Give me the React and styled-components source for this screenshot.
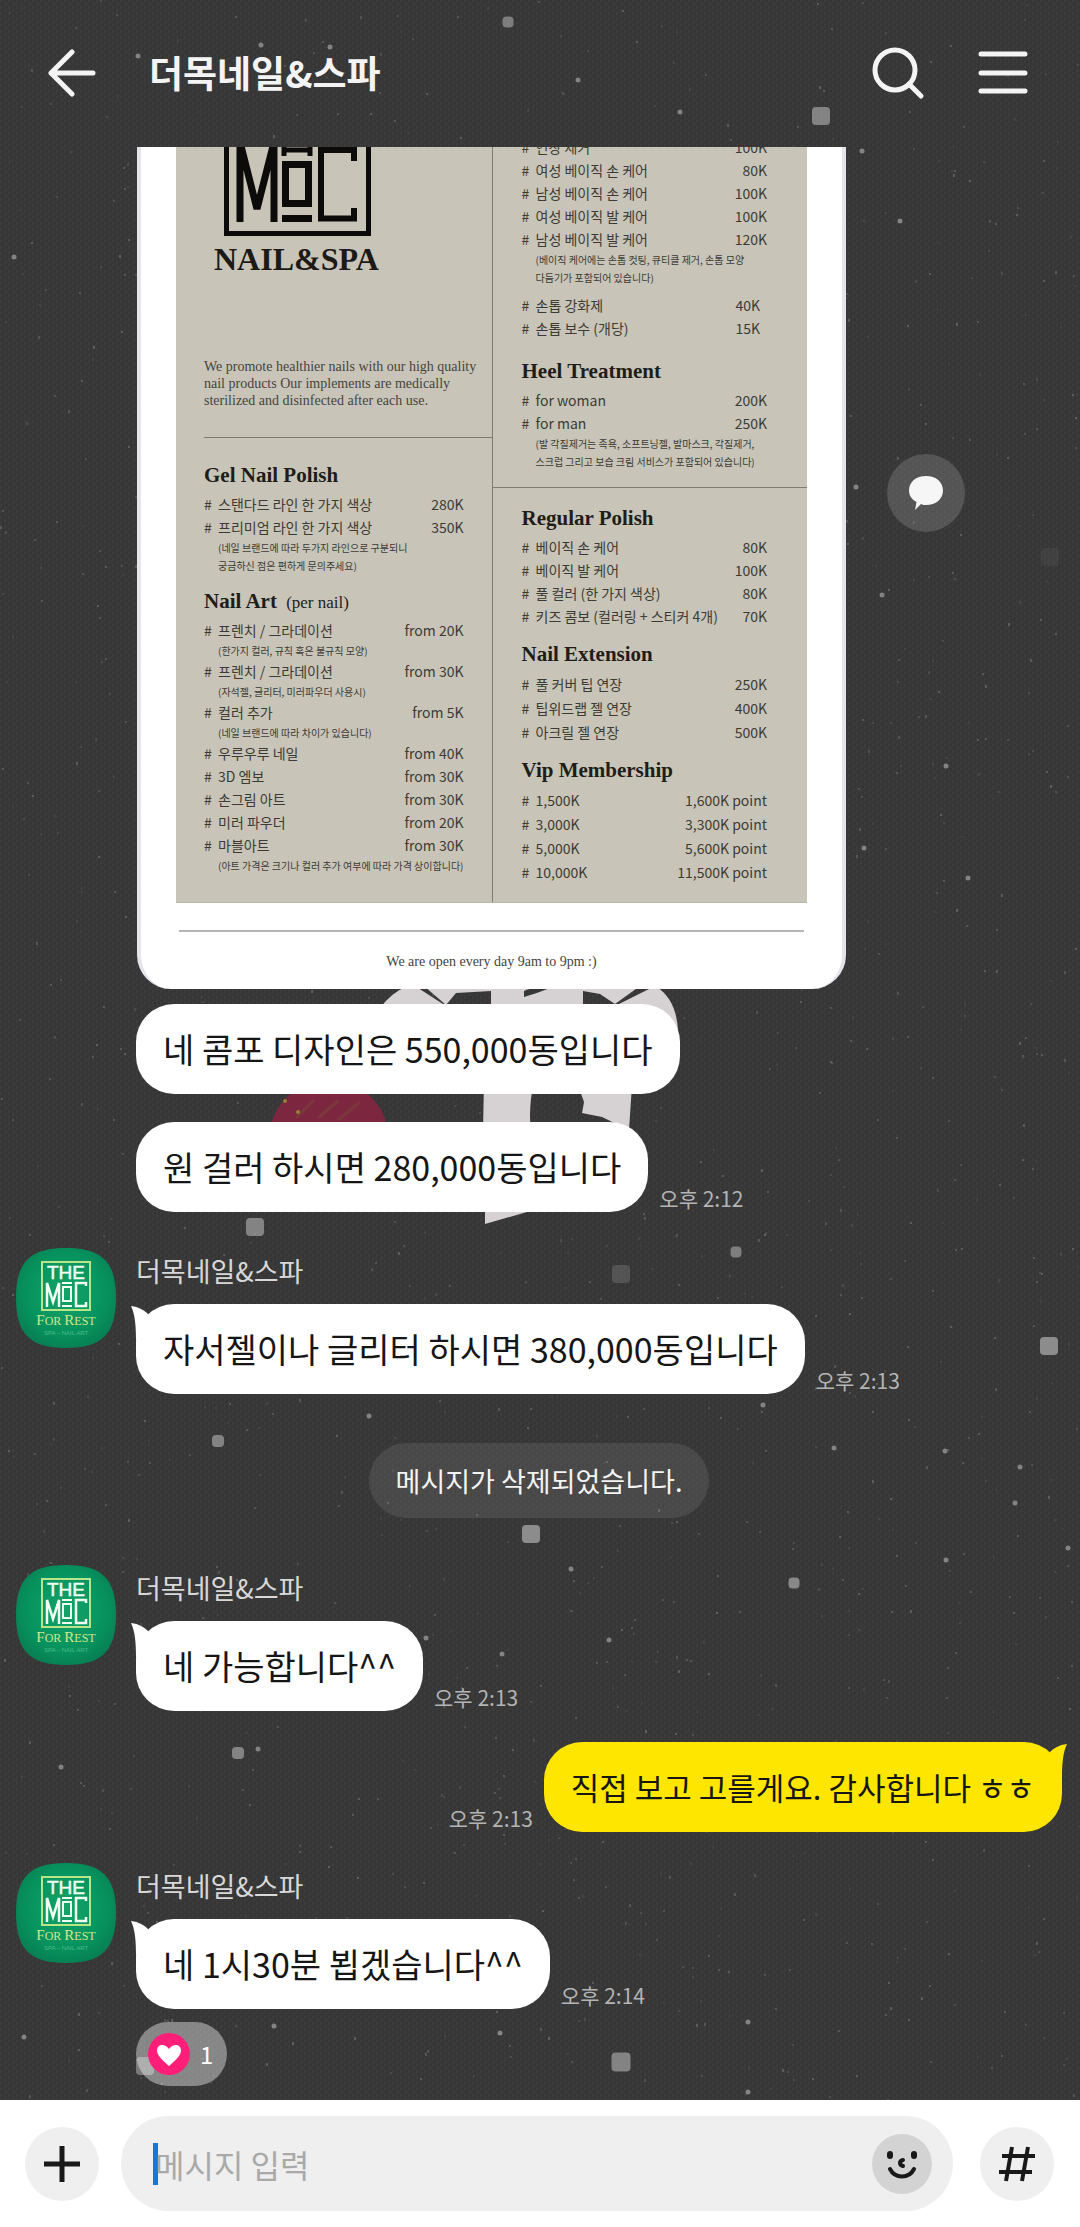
import styled, { createGlobalStyle } from 'styled-components';
import { useState } from 'react';

const SHOP = '더목네일&스파';

const gelPolish = [
    { name: '스탠다드 라인 한 가지 색상', price: '280K' },
    { name: '프리미엄 라인 한 가지 색상', price: '350K', notes: ['(네일 브랜드에 따라 두가지 라인으로 구분되니', '궁금하신 점은 편하게 문의주세요)'] },
];

const nailArt = [
    { name: '프렌치 / 그라데이션', price: 'from 20K', notes: ['(한가지 컬러, 규칙 혹은 불규칙 모양)'] },
    { name: '프렌치 / 그라데이션', price: 'from 30K', notes: ['(자석젤, 글리터, 미러파우더 사용시)'] },
    { name: '컬러 추가', price: 'from 5K', notes: ['(네일 브랜드에 따라 차이가 있습니다)'] },
    { name: '우루우루 네일', price: 'from 40K' },
    { name: '3D 엠보', price: 'from 30K' },
    { name: '손그림 아트', price: 'from 30K' },
    { name: '미러 파우더', price: 'from 20K' },
    { name: '마블아트', price: 'from 30K', notes: ['(아트 가격은 크기나 컬러 추가 여부에 따라 가격 상이합니다)'] },
];

const basicCare = [
    { name: '연장 제거', price: '100K' },
    { name: '여성 베이직 손 케어', price: '80K' },
    { name: '남성 베이직 손 케어', price: '100K' },
    { name: '여성 베이직 발 케어', price: '100K' },
    { name: '남성 베이직 발 케어', price: '120K', notes: ['(베이직 케어에는 손톱 컷팅, 큐티클 제거, 손톱 모양', '다듬기가 포함되어 있습니다)'] },
];

const nailRepair = [
    { name: '손톱 강화제', price: '40K' },
    { name: '손톱 보수 (개당)', price: '15K' },
];

const heel = [
    { name: 'for woman', price: '200K' },
    { name: 'for man', price: '250K', notes: ['(발 각질제거는 족욕, 소프트닝젤, 발마스크, 각질제거,', '스크럽 그리고 보습 크림 서비스가 포함되어 있습니다)'] },
];

const regularPolish = [
    { name: '베이직 손 케어', price: '80K' },
    { name: '베이직 발 케어', price: '100K' },
    { name: '풀 컬러 (한 가지 색상)', price: '80K' },
    { name: '키즈 콤보 (컬러링 + 스티커 4개)', price: '70K' },
];

const extension = [
    { name: '풀 커버 팁 연장', price: '250K' },
    { name: '팁위드랩 젤 연장', price: '400K' },
    { name: '아크릴 젤 연장', price: '500K' },
];

const membership = [
    { name: '1,500K', price: '1,600K point' },
    { name: '3,000K', price: '3,300K point' },
    { name: '5,000K', price: '5,600K point' },
    { name: '10,000K', price: '11,500K point' },
];

// x, y, size, opacity
const squares = [
    [508, 22, 11, 0.75], [821, 116, 18, 0.8], [255, 1227, 18, 0.8], [736, 1252, 11, 0.75], [218, 1441, 12, 0.8],
    [531, 1534, 18, 0.9], [794, 1583, 11, 0.85], [238, 1753, 12, 0.8], [145, 2066, 18, 0.7], [621, 2062, 19, 0.8],
    [1049, 1346, 18, 0.9], [1050, 557, 18, 0.1], [621, 1274, 18, 0.3],
];

const stars = [
    [369, 1416], [571, 1569], [502, 1654], [426, 1638], [609, 1640], [945, 1451], [1020, 1467], [1068, 1548],
    [946, 1560], [1015, 1503], [24, 2037], [274, 2026], [500, 2033], [882, 595], [946, 766], [864, 848],
    [968, 878], [900, 221], [862, 151], [61, 1767], [258, 1749], [748, 2022], [748, 2092], [856, 487],
    [261, 45], [330, 47], [138, 56], [578, 80], [680, 112], [14, 257], [763, 1405], [834, 1448], [1058, 1771],
];

// fixed-seed dust so that the wallpaper is the same on each render
const dust = [];
let seed = 17;
function rnd() {
    seed = (seed * 16807) % 2147483647;
    return seed / 2147483647;
}
for (let i = 0; i < 1600; i++) {
    dust.push([Math.round(rnd() * 1080), Math.round(rnd() * 2227), rnd() > 0.8 ? 3 : 2, 0.1 + rnd() * 0.35]);
}

function WallpaperArt() {
    return (
        <Wallpaper viewBox="0 0 1080 2227" preserveAspectRatio="xMidYMin slice" aria-hidden="true">
            <defs>
                <pattern id="weave" width="8" height="6" patternUnits="userSpaceOnUse">
                    <rect width="8" height="6" fill="#383838" />
                    <path d="M1 0v3M5 3v3" stroke="#404040" />
                    <path d="M3 1v4M7 0v2" stroke="#323232" />
                </pattern>
            </defs>
            <rect width="1080" height="2227" fill="url(#weave)" />
            {dust.map(([x, y, s, o], i) => <rect key={i} x={x} y={y} width="2" height={s} fill="#8d8d8d" opacity={o} />)}
            {stars.map(([x, y], i) => <circle key={i} cx={x} cy={y} r="2.5" fill="#969696" opacity="0.8" />)}
            {squares.map(([x, y, s, o], i) => (
                <rect key={i} x={x - s / 2} y={y - s / 2} width={s} height={s} rx="4" fill="#969696" opacity={o} />
            ))}
            <g fill="#d6d2d3">
                <path d="M380 1008Q392 992 408 986H415L446 1006Z" />
                <path d="M424 986H491V991L456 993L446 1005Z" />
                <path d="M491 986H583V1010H491Z" />
                <path d="M583 986H640L615 1004L600 994L583 991Z" />
                <path d="M615 1006L655 986Q676 998 678 1030H650L620 1006Z" />
                <path d="M484 1080H534Q528 1110 531 1130H483Z" />
                <path d="M578 1085H632L629 1130L602 1117L582 1113L584 1102Z" />
                <path d="M485 1200H527V1212L485 1224Z" />
            </g>
            <path d="M524 997V991Q532 987 550 988Q538 993 524 997Z" fill="#373737" />
            <circle cx="329" cy="1140" r="60" fill="#7d2640" />
            <path d="M296 1118l18-18M318 1118l20-17M338 1120l22-18" stroke="#7a4a38" strokeWidth="3" opacity="0.5" />
            <circle cx="285" cy="1101" r="2" fill="#93803c" />
            <circle cx="298" cy="1112" r="2" fill="#93803c" />
        </Wallpaper>
    );
}

function BigLogo() {
    return (
        <LogoMark width="147" height="89" viewBox="0 0 147 89" fill="none" stroke="#0c0b09" role="img" aria-label="THE MOC">
            <path d="M2.5-5V86.5H144.5V-5" strokeWidth="5" />
            <path d="M16 75V-5L33 62L50-5V75" strokeWidth="7" />
            <path d="M58 3H88M60 0V9M86 0V9" strokeWidth="5" />
            <rect x="61.5" y="17.5" width="23" height="39" strokeWidth="7" />
            <path d="M58 71.5H88" strokeWidth="7" />
            <path d="M130 14V3H97V71.5H130V61" strokeWidth="6" />
        </LogoMark>
    );
}

function ShopAvatar() {
    return (
        <Avatar type="button" aria-label={SHOP}>
            <svg width="100" height="100" viewBox="0 0 100 100">
                <defs>
                    <radialGradient id="green" cx="50%" cy="45%" r="62%">
                        <stop offset="0" stopColor="#12a468" />
                        <stop offset="0.65" stopColor="#07925d" />
                        <stop offset="1" stopColor="#087a52" />
                    </radialGradient>
                </defs>
                <path d="M50 0C86 0 100 14 100 50S86 100 50 100S0 86 0 50S14 0 50 0Z" fill="url(#green)" />
                <rect x="26" y="14" width="48" height="48" fill="none" stroke="#b9e58a" strokeWidth="2" />
                <text x="50" y="31" textAnchor="middle" fontFamily="Liberation Sans" fontSize="19" fill="#effff0" stroke="#effff0" strokeWidth="0.5">THE</text>
                <g fill="none" stroke="#effff0" strokeWidth="2.5">
                    <path d="M31 59V35L37 54L43 35V59" />
                    <rect x="47" y="39" width="8" height="14" strokeWidth="2" />
                    <path d="M46 35H56M46 58H56" strokeWidth="2" />
                    <path d="M70 38V35H60V58H70V54" />
                </g>
                <text x="50" y="77" textAnchor="middle" fontFamily="Liberation Serif" fill="#cfe88a" fontSize="12">
                    <tspan fontSize="15">F</tspan>OR <tspan fontSize="15">R</tspan>EST
                </text>
                <text x="50" y="87" textAnchor="middle" fontFamily="Liberation Sans" fill="#4fb98a" fontSize="6">SPA – NAIL ART</text>
            </svg>
        </Avatar>
    );
}

function PriceTable({ items, inset, roomy }) {
    return (
        <Prices $inset={inset} $roomy={roomy}>
            {items.map((item, i) => (
                <tbody key={i}>
                    <tr>
                        <Mark>#</Mark>
                        <Item>{item.name}</Item>
                        <Price>{item.price}</Price>
                    </tr>
                    {item.notes && item.notes.map((note) => (
                        <tr key={note}>
                            <td />
                            <Note colSpan={2}>{note}</Note>
                        </tr>
                    ))}
                </tbody>
            ))}
        </Prices>
    );
}

function PriceCard() {
    return (
        <Card>
            <Board>
                <Column>
                    <Brand>
                        <BigLogo />
                        <BrandName>NAIL&amp;SPA</BrandName>
                    </Brand>
                    <Intro>
                        We promote healthier nails with our high quality<br />
                        nail products Our implements are medically<br />
                        sterilized and disinfected after each use.
                    </Intro>
                    <LeftBlock>
                        <SectionTitle>Gel Nail Polish</SectionTitle>
                        <PriceTable items={gelPolish} />
                        <SectionTitle>Nail Art <small>(per nail)</small></SectionTitle>
                        <PriceTable items={nailArt} />
                    </LeftBlock>
                </Column>
                <Column>
                    <CareBlock>
                        <PriceTable items={basicCare} />
                        <PriceTable items={nailRepair} inset />
                        <HeelTitle>Heel Treatment</HeelTitle>
                        <PriceTable items={heel} />
                    </CareBlock>
                    <PolishBlock>
                        <SectionTitle>Regular Polish</SectionTitle>
                        <PriceTable items={regularPolish} />
                        <SectionTitle>Nail Extension</SectionTitle>
                        <PriceTable items={extension} roomy />
                        <SectionTitle>Vip Membership</SectionTitle>
                        <PriceTable items={membership} roomy />
                    </PolishBlock>
                </Column>
            </Board>
            <Hours>We are open every day 9am to 9pm :)</Hours>
        </Card>
    );
}

function Message({ text, time, tail, mine }) {
    return (
        <Line $mine={mine}>
            <Bubble $mine={mine}>
                {tail && (
                    <Tail $mine={mine} width="22" height="34" viewBox="0 0 22 34" aria-hidden="true">
                        <path d="M0 0C8 1 13 4 17 8L21 30L5 34C5 20 4 8 0 0Z" fill="currentColor" />
                    </Tail>
                )}
                <BubbleText $mine={mine}>{text}</BubbleText>
            </Bubble>
            {time && <Time>{time}</Time>}
        </Line>
    );
}

function ShopMessage({ text, time, children }) {
    return (
        <Group>
            <ShopAvatar />
            <GroupBody>
                <Sender>{SHOP}</Sender>
                <Message text={text} time={time} tail />
                {children}
            </GroupBody>
        </Group>
    );
}

export default function App() {
    const [draft, setDraft] = useState('');

    return (
        <Page>
            <GlobalStyle />
            <WallpaperArt />
            <Header>
                <IconButton type="button" aria-label="뒤로">
                    <svg width="48" height="50" viewBox="0 0 48 50" fill="none" stroke="#f4f4f4" strokeWidth="5" strokeLinecap="round" strokeLinejoin="round">
                        <path d="M24 4L3 25L24 46M3 25H45" />
                    </svg>
                </IconButton>
                <Title>{SHOP}</Title>
                <IconButton type="button" aria-label="검색">
                    <svg width="54" height="54" viewBox="0 0 54 54" fill="none" stroke="#f4f4f4" strokeWidth="5" strokeLinecap="round">
                        <circle cx="24" cy="24" r="20" />
                        <path d="M38 38L50 50" />
                    </svg>
                </IconButton>
                <IconButton type="button" aria-label="메뉴">
                    <svg width="50" height="50" viewBox="0 0 50 50" stroke="#f4f4f4" strokeWidth="5" strokeLinecap="round">
                        <path d="M3 6H47M3 25H47M3 43H47" />
                    </svg>
                </IconButton>
            </Header>

            <Chat>
                <Photo>
                    <PriceCard />
                    <Share type="button" aria-label="댓글">
                        <svg width="36" height="36" viewBox="0 0 36 36" fill="#f6f6f6">
                            <path d="M18 1C28 1 35 7 35 15.500S28 30 18 30C16 30 15 30 13 29L7 35L8.500 27C3 24 1 20 1 15.500C1 7 8 1 18 1Z" />
                        </svg>
                    </Share>
                </Photo>
                <Follow>
                    <Message text="네 콤포 디자인은 550,000동입니다" />
                    <Message text="원 걸러 하시면 280,000동입니다" time="오후 2:12" />
                </Follow>
                <ShopMessage text="자서젤이나 글리터 하시면 380,000동입니다" time="오후 2:13" />
                <Deleted>메시지가 삭제되었습니다.</Deleted>
                <ShopMessage text="네 가능합니다^^" time="오후 2:13" />
                <Mine>
                    <Message text="직접 보고 고를게요. 감사합니다 ㅎㅎ" time="오후 2:13" tail mine />
                </Mine>
                <ShopMessage text="네 1시30분 뵙겠습니다^^" time="오후 2:14">
                    <Reaction type="button" aria-label="하트 1">
                        <svg width="42" height="42" viewBox="0 0 42 42">
                            <circle cx="21" cy="21" r="21" fill="#ff1f78" />
                            <path d="M21 33C13 26 9 22 9 17.500C9 11 17 10 21 16C25 10 33 11 33 17.500C33 22 29 26 21 33Z" fill="#fff" />
                        </svg>
                        1
                    </Reaction>
                </ShopMessage>
            </Chat>

            <Footer>
                <RoundButton type="button" aria-label="첨부">
                    <svg width="36" height="36" viewBox="0 0 36 36" stroke="#191919" strokeWidth="5">
                        <path d="M18 0V36M0 18H36" />
                    </svg>
                </RoundButton>
                <Field>
                    <Caret />
                    <Input type="text" aria-label="메시지 입력" placeholder="메시지 입력" value={draft} onChange={event => setDraft(event.target.value)} />
                    <Emoji type="button" aria-label="이모티콘">
                        <svg width="32" height="32" viewBox="0 0 32 32" fill="none" stroke="#191919" strokeLinecap="round">
                            <path d="M4 6V8M28 6V8" strokeWidth="6" />
                            <path d="M17 12C13 13 13 17 17 18" strokeWidth="4" />
                            <path d="M4 21C9 31 23 31 28 21" strokeWidth="4" />
                        </svg>
                    </Emoji>
                </Field>
                <RoundButton type="button" aria-label="샵검색">
                    <svg width="36" height="36" viewBox="0 0 36 36" stroke="#191919" strokeWidth="4">
                        <path d="M13 1L7 35M29 1L23 35M3 10H36M0 26H33" />
                    </svg>
                </RoundButton>
            </Footer>
        </Page>
    );
}

const GlobalStyle = createGlobalStyle`
    * {
        box-sizing: border-box;
    }
    body {
        margin: 0;
        background-color: #373737;
        font-family: "Noto Sans CJK KR", sans-serif;
    }
    button {
        border: none;
        padding: 0;
        background: none;
        font-family: inherit;
        cursor: pointer;
    }
    svg {
        display: block;
    }
`

const Page = styled.div`
    position: relative;
    isolation: isolate;
    min-height: 100vh;
    display: flex;
    flex-direction: column;
`

const Wallpaper = styled.svg`
    position: absolute;
    inset: 0;
    z-index: -1;
    width: 100%;
    height: 100%;
`

const Header = styled.header`
    height: 147px;
    padding: 0 52px 2px 48px;
    display: flex;
    align-items: center;
    gap: 53px;
`

const IconButton = styled.button`
    flex: none;
`

const Title = styled.h1`
    flex: 1;
    margin: 0;
    padding-bottom: 2px;
    color: #f4f4f4;
    font-size: 37px;
    line-height: 50px;
    font-weight: 700;
`

const Chat = styled.main`
    flex: 1;
    padding: 0 18px 14px 16px;
    display: flex;
    flex-direction: column;
`

const Photo = styled.div`
    padding-left: 121px;
    display: flex;
    align-items: flex-start;
    gap: 41px;
`

const Card = styled.article`
    flex: 0 1 709px;
    overflow: hidden;
    padding: 0 35px;
    border: solid #e4e4ea;
    border-width: 0 4px;
    border-radius: 0 0 34px 34px;
    background-color: #fff;
    color: #3c3a34;
`

const Board = styled.div`
    display: grid;
    grid-template-columns: 1fr 1fr;
    background-color: #c8c5b8;
    border-bottom: 1px solid #b9b7ac;
`

const Column = styled.div`
    & + & {
        border-left: 1px solid #7f7c72;
    }
`

const Brand = styled.div`
    padding-left: 38px;
`

const LogoMark = styled.svg`
    margin-left: 10px;
`

const BrandName = styled.p`
    margin: 6px 0 0;
    color: #1c1a17;
    font-family: "Liberation Serif", serif;
    font-size: 32px;
    line-height: 34px;
    font-weight: 700;
`

const Intro = styled.p`
    margin: 82px 0 0 28px;
    padding-bottom: 28px;
    border-bottom: 1px solid #7f7c72;
    color: #45433d;
    font-family: "Liberation Serif", serif;
    font-size: 14px;
    line-height: 17px;
    white-space: nowrap;
`

const LeftBlock = styled.div`
    padding: 11px 28px 0;
`

const CareBlock = styled.div`
    overflow: hidden;
    padding: 0 40px 16px 29px;
    border-bottom: 1px solid #7f7c72;

    & > table:first-child {
        margin-top: -11px;
        margin-bottom: 7px;
    }
`

const PolishBlock = styled.div`
    padding: 4px 40px 18px 29px;
`

const SectionTitle = styled.h2`
    margin: 14px 0 6px;
    color: #1f1d19;
    font-family: "Liberation Serif", serif;
    font-size: 21px;
    line-height: 24px;
    font-weight: 700;

    small {
        margin-left: 4px;
        font-size: 17px;
        line-height: 17px;
        font-weight: 400;
    }
`

const HeelTitle = styled(SectionTitle)`
    margin: 19px 0 6px;
`

const Prices = styled.table`
    width: 100%;
    padding-right: ${props => props.$inset ? 7 : 0}px;
    border-spacing: 0;
    font-size: 14px;
    line-height: ${props => props.$roomy ? 24 : 23}px;
    white-space: nowrap;

    td {
        padding: 0;
    }
`

const Mark = styled.td`
    width: 14px;
`

const Item = styled.td`
    text-align: left;
`

const Price = styled.td`
    text-align: right;
`

const Note = styled.td`
    font-size: 10px;
    line-height: 18px;
    max-width: 0;
`

const Hours = styled.p`
    margin: 27px 3px 0;
    padding: 20px 0 17px;
    border-top: 2px solid #b5b5b5;
    color: #45433d;
    font-family: "Liberation Serif", serif;
    font-size: 14px;
    line-height: 20px;
    text-align: center;
`

const Share = styled.button`
    flex: none;
    width: 78px;
    height: 78px;
    margin-top: 307px;
    border-radius: 50%;
    background-color: rgba(255, 255, 255, 0.15);
    display: flex;
    align-items: center;
    justify-content: center;
`

const Follow = styled.div`
    padding: 15px 0 36px 120px;
    display: flex;
    flex-direction: column;
    gap: 28px;
`

const Group = styled.section`
    display: flex;
    align-items: flex-start;
    gap: 20px;
`

const GroupBody = styled.div`
    flex: 1;
    display: flex;
    flex-direction: column;
    align-items: flex-start;
`

const Avatar = styled.button`
    flex: none;
    width: 100px;
    height: 100px;
`

const Sender = styled.p`
    margin: 0;
    height: 56px;
    color: #d8d8d8;
    font-size: 27px;
    line-height: 46px;
`

const Line = styled.div`
    display: flex;
    flex-direction: ${props => props.$mine ? 'row-reverse' : 'row'};
    align-items: flex-end;
    gap: 11px;
`

const Bubble = styled.div`
    position: relative;
    padding: 20px 27px;
    border-radius: 38px;
    background-color: ${props => props.$mine ? '#ffe600' : '#fff'};
    color: ${props => props.$mine ? '#ffe600' : '#fff'};
`

const BubbleText = styled.p`
    margin: 0;
    color: #161616;
    font-size: ${props => props.$mine ? 31 : 34}px;
    line-height: 50px;
`

const Tail = styled.svg`
    position: absolute;
    top: 2px;
    left: ${props => props.$mine ? 'auto' : '-5px'};
    right: ${props => props.$mine ? '-5px' : 'auto'};
    transform: ${props => props.$mine ? 'scaleX(-1)' : 'none'};
`

const Time = styled.time`
    color: #b4b4b4;
    font-size: 21px;
    line-height: 28px;
    white-space: nowrap;
`

const Deleted = styled.p`
    align-self: center;
    margin: 49px 0 47px;
    padding: 18px 27px 17px;
    border-radius: 38px;
    background-color: rgba(255, 255, 255, 0.09);
    color: #f4f4f4;
    font-size: 27px;
    line-height: 40px;
`

const Mine = styled.div`
    padding: 31px 0;
`

const Reaction = styled.button`
    margin-top: 13px;
    height: 64px;
    padding: 0 14px 0 12px;
    border-radius: 32px;
    background-color: rgba(255, 255, 255, 0.4);
    color: #fff;
    font-size: 24px;
    line-height: 30px;
    display: flex;
    align-items: center;
    gap: 10px;
`

const Footer = styled.footer`
    height: 127px;
    padding: 0 26px 0 25px;
    background-color: #fff;
    display: flex;
    align-items: center;
    gap: 27px;
`

const RoundButton = styled.button`
    flex: none;
    width: 74px;
    height: 74px;
    border-radius: 50%;
    background-color: #efefef;
    display: flex;
    align-items: center;
    justify-content: center;
`

const Field = styled.div`
    flex: 1;
    height: 95px;
    margin-left: -5px;
    padding: 0 21px 0 32px;
    border-radius: 48px;
    background-color: #efefef;
    display: flex;
    align-items: center;
`

const Caret = styled.span`
    width: 5px;
    height: 42px;
    margin-right: -3px;
    background-color: #1478d4;
`

const Input = styled.input`
    flex: 1;
    min-width: 0;
    height: 60px;
    padding: 0;
    border: none;
    outline: none;
    background: none;
    color: #191919;
    font-family: inherit;
    font-size: 32px;

    &::placeholder {
        color: #a9a9a9;
        opacity: 1;
    }
`

const Emoji = styled.button`
    flex: none;
    width: 60px;
    height: 60px;
    border-radius: 50%;
    background-color: #d3d3d3;
    display: flex;
    align-items: center;
    justify-content: center;
`
